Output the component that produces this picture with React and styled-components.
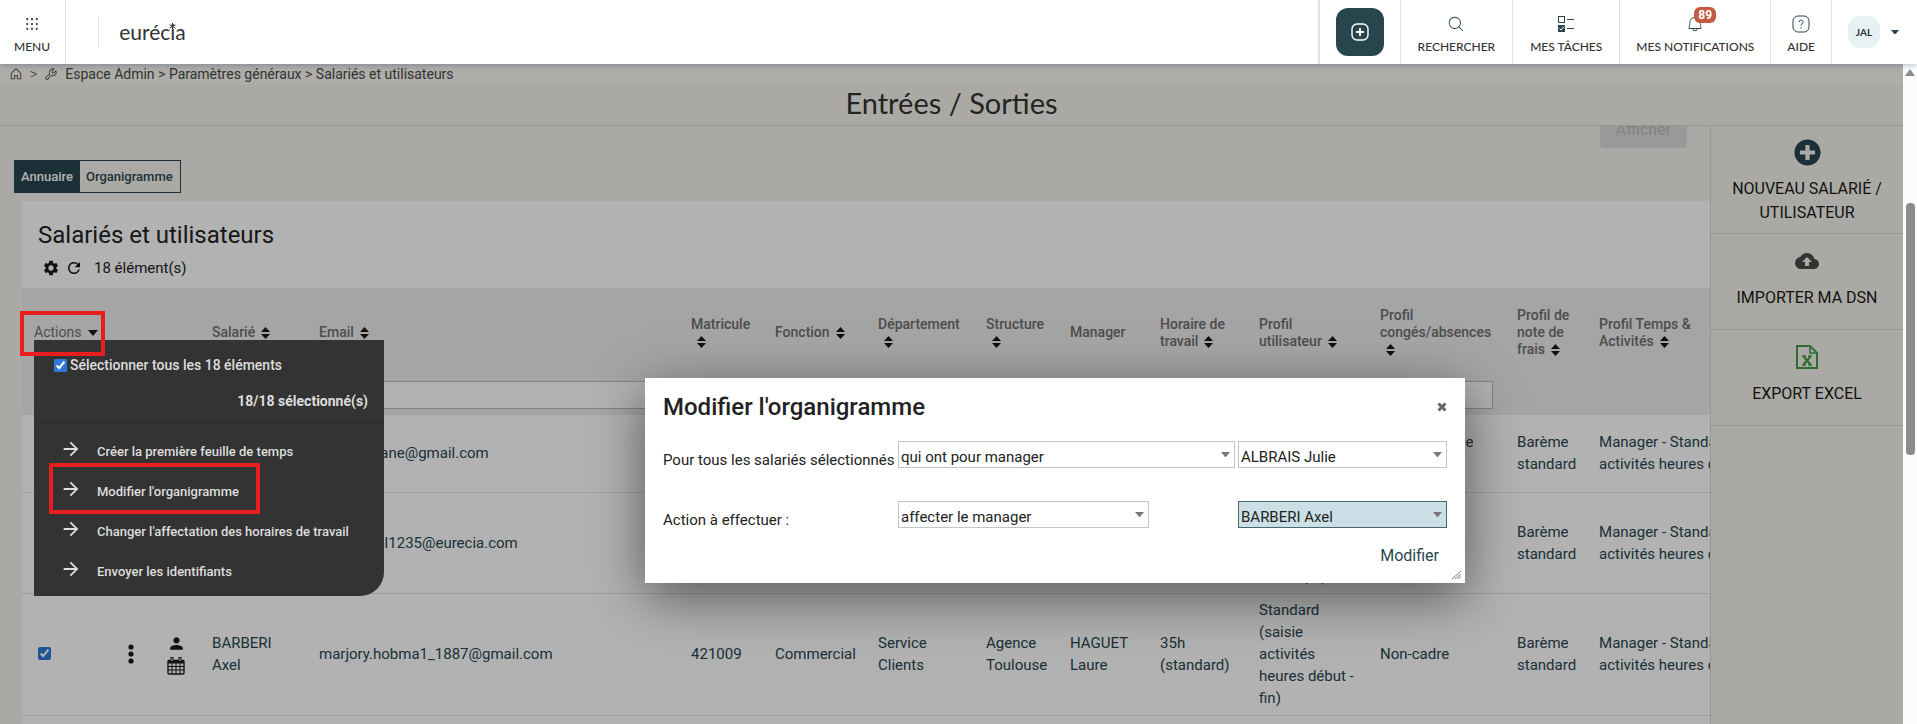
import { useState } from "react";
import styled, { createGlobalStyle } from "styled-components";
import {
  PiBellLight,
  PiDotsNineBold,
  PiHouse,
  PiMagnifyingGlassLight,
  PiWrench,
} from "react-icons/pi";
import {
  MdArrowForward,
  MdCloudUpload,
  MdPerson,
  MdRefresh,
  MdSettings,
} from "react-icons/md";
import { FaPlusCircle } from "react-icons/fa";

const columns = [
  { label: "Salarié", width: 107, sort: true },
  { label: "Email", width: 372, sort: true },
  { label: "Matricule\n", width: 84, sort: true },
  { label: "Fonction", width: 103, sort: true },
  { label: "Département\n", width: 108, sort: true },
  { label: "Structure\n", width: 84, sort: true },
  { label: "Manager", width: 90, sort: false },
  { label: "Horaire de\ntravail", width: 99, sort: true },
  { label: "Profil\nutilisateur", width: 121, sort: true },
  { label: "Profil\ncongés/absences\n", width: 137, sort: true },
  { label: "Profil de\nnote de\nfrais", width: 82, sort: true },
  { label: "Profil Temps &\nActivités", width: 263, sort: true },
];

const employees = [
  {
    id: 1,
    height: 77,
    cells: [
      "ALBRAIS\nJulie",
      "julie.norgane@gmail.com",
      "421007",
      "Commercial",
      "Service\nClients",
      "Agence\nToulouse",
      "HAGUET\nLaure",
      "35h\n(standard)",
      "Manager",
      "Congés saisie\npar jour",
      "Barème\nstandard",
      "Manager - Standard (saisie\nactivités heures début - fin)",
    ],
  },
  {
    id: 2,
    height: 101,
    cells: [
      "AUBERT\nPaul",
      "paul.ducol1235@eurecia.com",
      "421008",
      "Commercial",
      "Service\nClients",
      "Agence\nToulouse",
      "HAGUET\nLaure",
      "35h\n(standard)",
      "Standard\n(saisie\nactivités\nen temps)",
      "Non-cadre",
      "Barème\nstandard",
      "Manager - Standard (saisie\nactivités heures début - fin)",
    ],
  },
  {
    id: 3,
    height: 122,
    cells: [
      "BARBERI\nAxel",
      "marjory.hobma1_1887@gmail.com",
      "421009",
      "Commercial",
      "Service\nClients",
      "Agence\nToulouse",
      "HAGUET\nLaure",
      "35h\n(standard)",
      "Standard\n(saisie\nactivités\nheures début -\nfin)",
      "Non-cadre",
      "Barème\nstandard",
      "Manager - Standard (saisie\nactivités heures début - fin)",
    ],
  },
];

const menuActions = [
  { label: "Créer la première feuille de temps" },
  { label: "Modifier l'organigramme", active: true },
  { label: "Changer l'affectation des horaires de travail" },
  { label: "Envoyer les identifiants" },
];

/* icons */
const SortIcon = () => (
  <svg width="9" height="12" viewBox="0 0 9 12" fill="#191919">
    <path d="M4.500 0 9 5H0zM4.500 12 0 7h9z" />
  </svg>
);

const CaretIcon = ({ size = 8, color = "#777" }) => (
  <svg width={size} height={size * 0.6} viewBox="0 0 10 6" fill={color}>
    <path d="M0 0h10L5 6z" />
  </svg>
);

const CloseIcon = () => (
  <svg width="10" height="10" viewBox="0 0 10 10" stroke="#666">
    <path d="m1.500 1.500 7 7M8.500 1.500l-7 7" strokeWidth="3" />
  </svg>
);

const DotsIcon = () => (
  <svg width="6" height="20" viewBox="0 0 6 20" fill="#191919">
    <circle cx="3" cy="3" r="2.600" />
    <circle cx="3" cy="10" r="2.600" />
    <circle cx="3" cy="17" r="2.600" />
  </svg>
);

const PlusBoxIcon = () => (
  <svg width="18" height="18" viewBox="0 0 18 18" fill="none" stroke="#fff">
    <rect x="1" y="1" width="16" height="16" rx="5" strokeWidth="1.4" />
    <path d="M9 5v8M5 9h8" strokeWidth="2" />
  </svg>
);

const TasksIcon = () => (
  <svg width="18" height="18" viewBox="0 0 18 18" fill="none" stroke="#29464f">
    <rect x="1.5" y="1.5" width="6" height="6" />
    <rect x="1" y="10" width="7" height="7" fill="#29464f" stroke="none" />
    <path d="M2.5 13.5 4 15l3-3.5" stroke="#fff" />
    <path d="M10 4.500h7M10 13.500h7" />
  </svg>
);

const HelpIcon = () => (
  <svg width="18" height="18" viewBox="0 0 18 18" fill="none" stroke="#29464f">
    <rect x="1" y="1" width="16" height="16" rx="5" />
    <path d="M7 7.200a2 2 0 1 1 3 1.700c-.7.4-1 .8-1 1.600" />
    <path d="M9 12v1.300" />
  </svg>
);

const CalendarIcon = () => (
  <svg width="18" height="18" viewBox="0 0 18 18" fill="none" stroke="#191919">
    <rect x="1" y="3.5" width="16" height="13.5" rx="1" strokeWidth="1.4" />
    <path d="M1 5h16" strokeWidth="3" />
    <path d="M1 9.500h16M1 13h16M5 6v11M9 6v11M13 6v11" />
    <path d="M5 0v4M13 0v4" strokeWidth="3" />
    <path d="M5 1v3M13 1v3" stroke="#fff" />
  </svg>
);

const ExcelIcon = () => (
  <svg width="22" height="24" viewBox="0 0 22 24" fill="none" stroke="#469b46">
    <path d="M1 1h13l7 7v15H1z" strokeWidth="2" />
    <path d="M14 1v7h7" strokeWidth="1.6" />
    <path d="m7.500 11.500 7 8M14.500 11.500l-7 8" strokeWidth="2" />
    <path d="M6 11h4M12 11h4M6 20h4M12 20h4" strokeWidth="1.4" />
  </svg>
);

const ResizeGrip = () => (
  <svg width="9" height="8" viewBox="0 0 9 8" stroke="#777" fill="none">
    <path d="M0 8 9 0M3 8l6-5M6 8l3-2.500" />
  </svg>
);

function TopBar() {
  return (
    <Header>
      <MenuButton type="button">
        <PiDotsNineBold size={18} />
        MENU
      </MenuButton>
      <Brand href="#accueil">
        eurécia
        <svg width="7" height="7" viewBox="0 0 7 7" stroke="#333">
          <path d="M3.500 0v7M.5 1.800l6 3.400M6.500 1.800l-6 3.400" />
        </svg>
      </Brand>
      <AddZone>
        <AddButton type="button" aria-label="Ajouter">
          <PlusBoxIcon />
        </AddButton>
      </AddZone>
      <NavButton type="button" $wide>
        <PiMagnifyingGlassLight size={18} />
        RECHERCHER
      </NavButton>
      <NavButton type="button" $wide>
        <TasksIcon />
        MES TÂCHES
      </NavButton>
      <NavButton type="button">
        <PiBellLight size={18} />
        MES NOTIFICATIONS
        <Badge>89</Badge>
      </NavButton>
      <NavButton type="button">
        <HelpIcon />
        AIDE
      </NavButton>
      <Account type="button">
        <Avatar>JAL</Avatar>
        <CaretIcon color="#29464f" />
      </Account>
    </Header>
  );
}

function EmployeeTable() {
  return (
    <TableWrap>
      <Table>
        <colgroup>
          <Col $width={88} />
          <Col $width={42} />
          <Col $width={48} />
          {columns.map((column) => (
            <Col key={column.label} $width={column.width} />
          ))}
        </colgroup>
        <thead>
          <HeadRow>
            <HeadCell colSpan={3}>
              <ActionsButton type="button">
                Actions
                <CaretIcon size={10} color="#191919" />
              </ActionsButton>
            </HeadCell>
            {columns.map((column) => (
              <HeadCell key={column.label} scope="col">
                {column.label}
                {column.sort && (
                  <SortButton type="button" aria-label="Trier">
                    <SortIcon />
                  </SortButton>
                )}
              </HeadCell>
            ))}
          </HeadRow>
          <FilterRow>
            <td colSpan={3} />
            <FilterCell colSpan={10}>
              <FilterInput type="text" aria-label="Filtrer" />
            </FilterCell>
            <td colSpan={2} />
          </FilterRow>
        </thead>
        <tbody>
          {employees.map((employee) => (
            <Row key={employee.id} $height={employee.height}>
              <SelectCell>
                <Checkbox
                  type="checkbox"
                  defaultChecked
                  aria-label="Sélectionner"
                />
              </SelectCell>
              <IconCell>
                <IconButton type="button" aria-label="Options">
                  <DotsIcon />
                </IconButton>
              </IconCell>
              <IconCell>
                <IconButton type="button" aria-label="Fiche salarié">
                  <MdPerson size={19} />
                </IconButton>
                <IconButton type="button" aria-label="Planning">
                  <CalendarIcon />
                </IconButton>
              </IconCell>
              {employee.cells.map((cell, index) => (
                <Cell key={columns[index].label}>{cell}</Cell>
              ))}
            </Row>
          ))}
          <Row $height={77}>
            <td colSpan={15} />
          </Row>
        </tbody>
      </Table>
    </TableWrap>
  );
}

function ActionsMenu() {
  return (
    <MenuPanel>
      <SelectAll>
        <label>
          <Checkbox type="checkbox" defaultChecked />
          Sélectionner tous les 18 éléments
        </label>
        <strong>18/18 sélectionné(s)</strong>
      </SelectAll>
      <ul>
        {menuActions.map((action) => (
          <li key={action.label}>
            <MenuItem type="button">
              <MdArrowForward size={22} />
              <span>{action.label}</span>
              {action.active && <ItemHighlight />}
            </MenuItem>
          </li>
        ))}
      </ul>
      <ActionsHighlight />
    </MenuPanel>
  );
}

function Dropdown({ id, label, options, $width, $selected }) {
  return (
    <SelectWrap $width={$width}>
      <Select id={id} aria-label={label} $selected={$selected}>
        {options.map((option) => (
          <option key={option}>{option}</option>
        ))}
      </Select>
      <CaretIcon size={9} />
    </SelectWrap>
  );
}

function OrgDialog({ onClose }) {
  return (
    <Dialog role="dialog" aria-labelledby="dialogTitle">
      <DialogHead>
        <h2 id="dialogTitle">Modifier l'organigramme</h2>
        <CloseButton type="button" aria-label="Fermer" onClick={onClose}>
          <CloseIcon />
        </CloseButton>
      </DialogHead>
      <DialogForm>
        <label htmlFor="filterType">Pour tous les salariés sélectionnés</label>
        <Dropdown
          id="filterType"
          options={["qui ont pour manager"]}
          $width="337px"
        />
        <Dropdown label="Manager actuel" options={["ALBRAIS Julie"]} />
        <label htmlFor="actionType">Action à effectuer :</label>
        <Dropdown
          id="actionType"
          options={["affecter le manager"]}
          $width="251px"
        />
        <Dropdown label="Nouveau manager" options={["BARBERI Axel"]} $selected />
      </DialogForm>
      <DialogFoot>
        <button type="button">Modifier</button>
      </DialogFoot>
      <Grip>
        <ResizeGrip />
      </Grip>
    </Dialog>
  );
}

function App() {
  const [dialog, setDialog] = useState(true);

  return (
    <Page>
      <GlobalStyle />
      <TopBar />
      <Below>
        <Workspace>
          <Breadcrumb>
            <a href="#accueil" aria-label="Accueil">
              <PiHouse size={14} />
            </a>
            <span>&gt;</span>
            <PiWrench size={14} />
            <p>
              <a href="#admin">Espace Admin</a> &gt;{" "}
              <a href="#parametres">Paramètres généraux</a> &gt;{" "}
              <a href="#salaries">Salariés et utilisateurs</a>
            </p>
          </Breadcrumb>
          <PageTitle>Entrées / Sorties</PageTitle>
          <Body>
            <Main>
              <ShowButton type="button" disabled>
                Afficher
              </ShowButton>
              <Tabs>
                <Tab type="button" $active>
                  Annuaire
                </Tab>
                <Tab type="button">Organigramme</Tab>
              </Tabs>
              <Card>
                <CardHead>
                  <h2>Salariés et utilisateurs</h2>
                  <CardTools>
                    <IconButton type="button" aria-label="Paramètres">
                      <MdSettings size={18} />
                    </IconButton>
                    <IconButton type="button" aria-label="Actualiser">
                      <MdRefresh size={18} />
                    </IconButton>
                    <span>18 élément(s)</span>
                  </CardTools>
                </CardHead>
                <EmployeeTable />
              </Card>
            </Main>
            <Sidebar>
              <SideLink href="#nouveau" $tight>
                <i>
                  <FaPlusCircle size={27} color="#29464f" />
                </i>
                NOUVEAU SALARIÉ / UTILISATEUR
              </SideLink>
              <SideLink href="#dsn">
                <i>
                  <MdCloudUpload size={24} color="#494949" />
                </i>
                IMPORTER MA DSN
              </SideLink>
              <SideLink href="#excel">
                <i>
                  <ExcelIcon />
                </i>
                EXPORT EXCEL
              </SideLink>
            </Sidebar>
          </Body>
          <Overlay />
          <ActionsMenu />
          {dialog && <OrgDialog onClose={() => setDialog(false)} />}
        </Workspace>
        <Scrollbar>
          <CaretUp />
          <Thumb />
        </Scrollbar>
      </Below>
    </Page>
  );
}
export default App;

const GlobalStyle = createGlobalStyle`
  * {
    box-sizing: border-box;
  }
  body {
    margin: 0;
    font-family: Roboto, "Liberation Sans", sans-serif;
    font-size: 15px;
    color: #29464f;
  }
  button, input, select {
    font: inherit;
    color: inherit;
  }
  button {
    padding: 0;
    border: 0;
    background: none;
  }
  a {
    color: inherit;
    text-decoration: none;
  }
  h1, h2, p, ul {
    margin: 0;
    padding: 0;
    font-weight: 400;
  }
  ul {
    list-style: none;
  }
  svg {
    flex: none;
  }
`;

const Page = styled.div`
  height: 100vh;
  display: flex;
  flex-direction: column;
  overflow: hidden;
`;

const Header = styled.header`
  position: relative;
  z-index: 2;
  height: 64px;
  flex: none;
  display: flex;
  background-color: #fff;
  box-shadow: 0 1px 6px rgba(60, 80, 110, 0.4);
  font-family: Lato, sans-serif;
  color: #333;
`;

const NavButton = styled.button`
  position: relative;
  display: flex;
  flex-direction: column;
  align-items: center;
  justify-content: center;
  gap: 6px;
  padding: 6px ${(props) => (props.$wide ? "17px" : "16px")} 0;
  border-left: 1px solid #e3e2da;
  font-size: 12px;
  font-weight: 500;
  line-height: 16px;
  svg {
    color: #29464f;
  }
`;

const MenuButton = styled(NavButton)`
  border-left: 0;
  border-right: 1px solid #e3e2da;
  padding: 6px 15px 0 14px;
`;

const Brand = styled.a`
  position: relative;
  align-self: center;
  margin-left: 32px;
  margin-right: auto;
  padding-left: 20px;
  border-left: 1px solid #e3e2da;
  font-size: 21px;
  line-height: 32px;
  svg {
    position: absolute;
    top: 7px;
    right: 10px;
  }
`;

const AddZone = styled.div`
  display: flex;
  align-items: center;
  padding: 0 16px;
  border-left: 2px solid #e3e2da;
`;

const AddButton = styled.button`
  display: flex;
  align-items: center;
  justify-content: center;
  width: 48px;
  height: 48px;
  border-radius: 12px;
  background-color: #29464f;
`;

const Badge = styled.span`
  position: absolute;
  top: 7px;
  left: 74px;
  padding: 0 4px;
  border-radius: 6px;
  background-color: #c45a43;
  color: #fff;
  font-family: Roboto, sans-serif;
  font-weight: 700;
`;

const Account = styled.button`
  display: flex;
  align-items: center;
  gap: 11px;
  padding: 0 18px 0 16px;
  border-left: 1px solid #e3e2da;
`;

const Avatar = styled.span`
  width: 32px;
  border-radius: 13px;
  background-color: #e6f1f3;
  font-size: 10px;
  font-weight: 700;
  line-height: 32px;
`;

const Below = styled.div`
  flex: 1;
  min-height: 0;
  display: flex;
`;

const Workspace = styled.div`
  position: relative;
  flex: 1;
  min-width: 0;
  display: flex;
  flex-direction: column;
  background-color: #f5f3ec;
`;

const Overlay = styled.div`
  position: absolute;
  inset: 0;
  background-color: rgba(0, 0, 0, 0.3);
`;

const Breadcrumb = styled.nav`
  display: flex;
  align-items: center;
  gap: 7px;
  height: 21px;
  flex: none;
  padding: 0 0 2px 9px;
  background-color: #faf8f2;
  color: #494949;
  font-size: 14px;
  font-weight: 300;
  svg {
    display: block;
  }
`;

const PageTitle = styled.h1`
  flex: none;
  height: 41px;
  border-bottom: 1px solid #d8d7d1;
  font-family: Lato, sans-serif;
  font-size: 29px;
  line-height: 36px;
  text-align: center;
  color: #333;
`;

const Body = styled.div`
  flex: 1;
  min-height: 0;
  display: flex;
`;

const Main = styled.main`
  flex: 1;
  min-width: 0;
  overflow: hidden;
`;

/* the page is scrolled, so the button is cut by the title bar */
const ShowButton = styled.button`
  display: block;
  margin: -14px 23px 12px auto;
  padding: 0 16px;
  border-radius: 4px;
  background-color: #dcdcdc;
  color: #bbb;
  font-size: 16px;
  line-height: 36px;
`;

const Tabs = styled.div`
  display: flex;
  width: fit-content;
  margin: 0 0 8px 14px;
  border: 1px solid #29464f;
`;

const Tab = styled.button`
  padding: 0 7px 0 6px;
  font-size: 13px;
  font-weight: 500;
  line-height: 31px;
  background-color: ${(props) => (props.$active ? "#29464f" : "transparent")};
  color: ${(props) => (props.$active ? "#fff" : "#29464f")};
`;

const Card = styled.section`
  margin-left: 22px;
  background-color: #fff;
`;

const CardHead = styled.div`
  padding: 18px 16px 8px;
  color: #222;
  h2 {
    font-size: 24px;
    line-height: 32px;
  }
`;

const CardTools = styled.div`
  display: flex;
  align-items: center;
  gap: 5px;
  padding: 5px 4px 0;
  line-height: 24px;
  span {
    margin-left: 6px;
  }
`;

const IconButton = styled.button`
  display: flex;
  margin: 0;
  color: #191919;
`;

const TableWrap = styled.div`
  overflow: hidden;
`;

const Table = styled.table`
  width: 1828px;
  table-layout: fixed;
  border-collapse: collapse;
`;

const Col = styled.col`
  width: ${(props) => props.$width}px;
`;

const HeadRow = styled.tr`
  height: 87px;
  background-color: #ececec;
`;

const HeadCell = styled.th`
  padding: 2px 0 0 12px;
  text-align: left;
  white-space: pre;
  font-size: 14px;
  font-weight: 500;
  line-height: 17px;
  color: #6f6f6f;
`;

const ActionsButton = styled.button`
  display: flex;
  align-items: center;
  gap: 7px;
  font-weight: 400;
`;

const SortButton = styled.button`
  margin-left: 6px;
  vertical-align: middle;
  line-height: 12px;
  svg {
    display: block;
  }
`;

const FilterRow = styled.tr`
  height: 40px;
  background-color: #ececec;
`;

const FilterCell = styled.td`
  padding: 0 12px;
`;

const FilterInput = styled.input`
  display: block;
  width: 100%;
  height: 28px;
  border: 1px solid #bbb;
  background-color: #fff;
`;

const Row = styled.tr`
  height: ${(props) => props.$height}px;
  border-bottom: 1px solid #e2e2e2;
`;

const Cell = styled.td`
  padding: 5px 0 5px 12px;
  white-space: pre;
  line-height: 22px;
`;

const SelectCell = styled.td`
  padding: 0 0 2px 16px;
`;

const IconCell = styled.td`
  padding: 0;
  ${IconButton} {
    margin: 4px auto;
  }
`;

const Checkbox = styled.input`
  display: block;
  width: 13px;
  height: 13px;
  margin: 0;
  accent-color: #3077da;
`;

const MenuPanel = styled.div`
  position: absolute;
  top: 276px;
  left: 34px;
  width: 350px;
  padding-bottom: 7px;
  border-bottom-right-radius: 24px;
  background-color: #333;
  color: #ddd;
  ul {
    padding-top: 6px;
    border-top: 1px solid #2c2c2c;
  }
`;

const SelectAll = styled.div`
  padding: 15px 16px 11px 20px;
  font-size: 14px;
  font-weight: 500;
  line-height: 20px;
  label {
    display: flex;
    align-items: center;
    gap: 3px;
  }
  strong {
    display: block;
    margin-top: 16px;
    text-align: right;
    font-weight: 700;
  }
`;

const MenuItem = styled.button`
  position: relative;
  display: flex;
  align-items: center;
  gap: 15px;
  width: 100%;
  height: 40px;
  padding-left: 26px;
  font-size: 13px;
  font-weight: 500;
  span {
    padding-top: 4px;
  }
`;

const Highlight = styled.div`
  position: absolute;
  border: 4px solid #e81e1e;
  pointer-events: none;
`;

const ItemHighlight = styled(Highlight)`
  top: -6px;
  left: 15px;
  width: 211px;
  height: 51px;
`;

const ActionsHighlight = styled(Highlight)`
  top: -29px;
  left: -14px;
  width: 85px;
  height: 45px;
`;

const Dialog = styled.div`
  position: absolute;
  top: 314px;
  left: 645px;
  width: 820px;
  padding: 13px 18px 16px;
  background-color: #fff;
  box-shadow: 0 14px 50px rgba(0, 0, 0, 0.5);
  color: #222;
`;

const DialogHead = styled.div`
  display: flex;
  align-items: center;
  justify-content: space-between;
  h2 {
    font-size: 24px;
    font-weight: 500;
    line-height: 32px;
  }
`;

const CloseButton = styled.button`
  display: flex;
`;

const DialogForm = styled.div`
  display: grid;
  grid-template-columns: 235px 340px 1fr;
  row-gap: 31px;
  margin-top: 18px;
  label {
    padding-top: 9px;
    line-height: 20px;
    white-space: nowrap;
  }
`;

const SelectWrap = styled.div`
  position: relative;
  width: ${(props) => props.$width || "100%"};
  height: 27px;
  svg {
    position: absolute;
    top: 11px;
    right: 5px;
    pointer-events: none;
  }
`;

const Select = styled.select`
  appearance: none;
  display: block;
  width: 100%;
  height: 100%;
  padding: 4px 2px 0;
  border: 1px solid ${(props) => (props.$selected ? "#4a666e" : "#c4c4c4")};
  border-radius: 0;
  background-color: ${(props) => (props.$selected ? "#cbe0e6" : "#fff")};
`;

const DialogFoot = styled.div`
  display: flex;
  justify-content: flex-end;
  padding: 15px 8px 0;
  font-size: 16px;
  line-height: 22px;
  color: #29464f;
`;

const Grip = styled.span`
  position: absolute;
  right: 4px;
  bottom: 4px;
  display: flex;
`;

const Sidebar = styled.aside`
  width: 193px;
  flex: none;
  border-left: 1px solid #d8d7d1;
`;

const SideLink = styled.a`
  display: flex;
  flex-direction: column;
  align-items: center;
  gap: 11px;
  padding: ${(props) => (props.$tight ? "12px 12px 8px" : "13px 12px 19px")};
  border-bottom: 1px solid #d8d7d1;
  color: #191919;
  font-size: 16px;
  line-height: 24px;
  text-align: center;
  i {
    display: flex;
    align-items: center;
    height: 28px;
  }
`;

const Scrollbar = styled.div`
  display: flex;
  flex-direction: column;
  align-items: center;
  width: 14px;
  padding-top: 5px;
  background-color: #fcfcfc;
`;

const CaretUp = styled.span`
  border: 5px solid transparent;
  border-top-width: 0;
  border-bottom: 7px solid #8b8b8b;
`;

const Thumb = styled.span`
  width: 9px;
  height: 252px;
  margin-top: 127px;
  border-radius: 4px;
  background-color: #8b8b8b;
`;
